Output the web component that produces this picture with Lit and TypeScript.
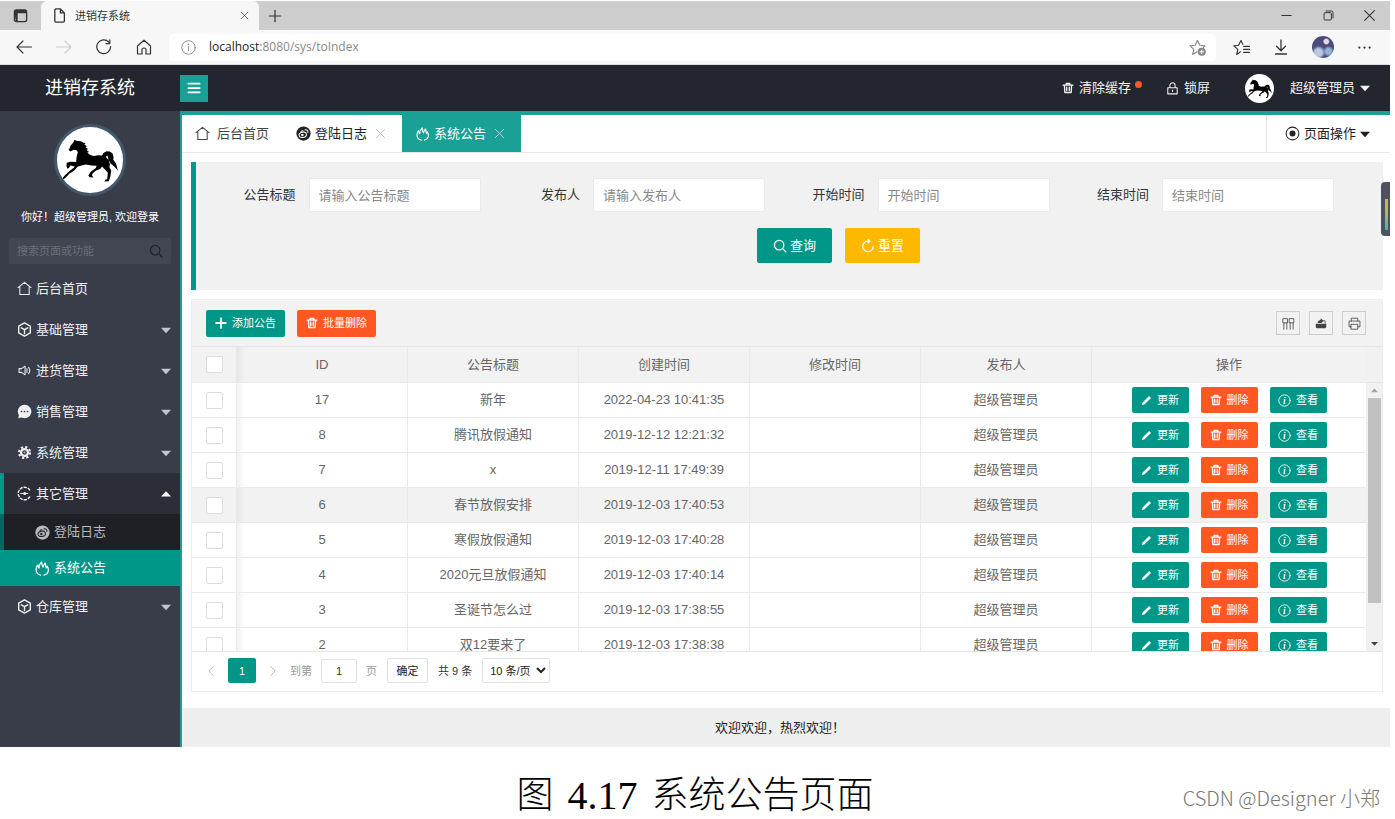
import { LitElement, html, css, svg, nothing, TemplateResult } from "lit";
import { customElement, property, state } from "lit/decorators.js";
import { classMap } from "lit/directives/class-map.js";

const stroke = (body: unknown, width = 1.2) =>
  svg`<g fill="none" stroke="currentColor" stroke-width=${width} stroke-linecap="round" stroke-linejoin="round">${body}</g>`;

const ICONS: Record<string, unknown> = {
  home: stroke(svg`<path d="M1 7 8 1.400 15 7M3 5.800v8.600h10V5.800"/>`, 1.1),
  cube: stroke(svg`<path d="M8 1 14.2 4.4v7.2L8 15 1.8 11.6V4.4zM4.6 6.2 8 8.2l3.4-2M8 8.2v4"/>`, 1.5),
  sound: stroke(svg`<path d="M2.2 6h2.6l3.8-2.6v9.2L4.8 10H2.2zM10.6 6v4M12.4 4.6c1.4 2 1.4 4.8 0 6.8"/>`, 1.1),
  chat: svg`<path fill="currentColor" d="M8 .8a7.2 7.2 0 1 1-3 13.7l-3.6.7.6-3.4A7.2 7.2 0 0 1 8 .8z"/><g fill="#393d49"><circle cx="4.8" cy="8" r=".9"/><circle cx="8" cy="8" r=".9"/><circle cx="11.2" cy="8" r=".9"/></g>`,
  gear: svg`<g fill="none" stroke="currentColor"><circle cx="8" cy="8" r="3.7" stroke-width="2.4"/><circle cx="8" cy="8" r="5.9" stroke-width="2.2" stroke-dasharray="2.4 2.234"/></g><circle cx="8" cy="8" r="1.1" fill="currentColor" opacity=".6"/>`,
  ring: svg`<path d="M13.800 4.600A6.700 6.700 0 1 0 13.800 11.400" fill="none" stroke="currentColor" stroke-width="1.500" stroke-dasharray="3.400 1"/><circle cx="8.300" cy="8" r="1.700" fill="currentColor"/><path d="M3.400 8H12" stroke="currentColor"/>`,
  weibo: svg`<circle cx="8" cy="8" r="7.6" fill="currentColor"/><g fill="none" stroke="var(--hole, #fff)" stroke-width="1.1"><ellipse cx="7.2" cy="9.4" rx="4" ry="2.8" transform="rotate(-12 7.2 9.4)"/><path d="M9.2 4.2c2.4-.5 4 1 3.4 3.2M5 6.4c1-1.4 2.6-1.8 2.8-.4"/></g><circle cx="6.8" cy="9.6" r="1.3" fill="var(--hole, #fff)"/>`,
  fire: stroke(svg`<path d="M6 15C2.200 14.200.8 10.800 1.400 7.400 1.600 6 2.200 5 3 4.200c0 1.600.4 2.600 1.200 3.400C4.200 5.200 5 2.800 7.200 1c-.2 2 .2 4 1.400 5.600C9 5 9.600 3.400 11 2.200c0 2.200.8 3.400 1 5.200.4-.6.8-1.200 1-2 2.200 4 1.600 8.400-3.400 9.600"/>`, 1.3),
  trash: stroke(svg`<path d="M1.500 4.200h13M5.600 4V2h4.800v2M3.200 4.400l.6 9.600h8.400l.6-9.600M6.300 7v4.400M9.700 7v4.400"/>`, 1.8),
  lock: stroke(svg`<path d="M2.200 7h11.600v7.600H2.200zM4.800 7V4.200a3.200 3.200 0 0 1 6.400 0V7M8 9.800v2"/>`, 1.3),
  menu: stroke(svg`<path d="M1.600 3h12.800M1.600 8h12.800M1.600 13h12.800"/>`, 2),
  search: stroke(svg`<circle cx="7" cy="7" r="5.400"/><path d="m11 11 3.800 3.800"/>`, 1.4),
  refresh: stroke(svg`<path d="M14 9A6 6 0 1 1 8.600 2.400M8.200.6l2 2-2.200 1.600"/>`, 1.5),
  plus: stroke(svg`<path d="M8 1.500v13M1.500 8h13"/>`, 2.4),
  thinPlus: stroke(svg`<path d="M8 1.500v13M1.500 8h13"/>`, 1.4),
  pencil: svg`<path fill="currentColor" d="m1 15 1.400-4.200L11.800 1.400l2.800 2.800L5.200 13.600z"/>`,
  info: svg`${stroke(svg`<circle cx="8" cy="8" r="7"/>`, 1.1)}<path d="M8.700 3.500 8.400 5M7 7h1.300l-.8 4.600h1.400" stroke="currentColor" stroke-width="1.600" fill="none"/>`,
  target: svg`<circle cx="8" cy="8" r="6.800" fill="none" stroke="currentColor" stroke-width="1.100"/><circle cx="8" cy="8" r="3.200" fill="currentColor"/>`,
  close: stroke(svg`<path d="m2 2 12 12M14 2 2 14"/>`, 1.3),
  columns: stroke(svg`<path d="M1.500 2h5.200v5.200H1.500zM9.300 2h5.200v5.200H9.300zM2.300 7.200V15M5.900 7.200V15M10.100 7.200V15M13.700 7.200V15"/>`, 1),
  share: svg`<path fill="currentColor" d="M1 9h14v4.500L13.500 15h-11L1 13.500zM3.500 8c.3-3 2-4 4-4V1.500L11.500 5 8.500 8z"/><path d="M10 5h3.500v4" fill="none" stroke="currentColor"/>`,
  printer: stroke(svg`<path d="M4 5V1.500h8V5M4 12H1.300V5h13.400v7H12M4 9h8v6H4z"/>`, 1),
  prev: stroke(svg`<path d="M11 2 5 8l6 6"/>`, 1.3),
  next: stroke(svg`<path d="m5 2 6 6-6 6"/>`, 1.3),
  tabs: svg`<rect x="1.500" y="2" width="13" height="12.500" rx="2" fill="none" stroke="currentColor" stroke-width="1.400"/><path d="M1.500 2h13v3.500h-13zM1.500 5h3.500v9H3z" fill="currentColor"/>`,
  file: stroke(svg`<path d="M3 2.200Q3 1 4.200 1H9l4.200 4.200v8.600q0 1.200-1.200 1.200H4.200Q3 15 3 13.800zM9 1v4.200h4.200"/>`, 1.4),
  back: stroke(svg`<path d="M15.500 8H1M7 2 1 8l6 6"/>`, 1.1),
  forward: stroke(svg`<path d="M.5 8H15M9 2l6 6-6 6"/>`, 1.1),
  reload: stroke(svg`<path d="M14.600 7.500A6.900 6.900 0 1 1 12.700 3M13.800.8v3.800H10"/>`, 1.2),
  house: stroke(svg`<path d="M1.500 7 8 1.200 14.500 7v8H10V10.500q0-1.500-2-1.500t-2 1.500V15H1.500z"/>`, 1.2),
  about: svg`${stroke(svg`<circle cx="8" cy="8" r="7.200"/><path d="M8 7v4.500"/>`, 1)}<circle cx="8" cy="4.600" r=".9" fill="currentColor"/>`,
  starAdd: svg`${stroke(svg`<path d="M7.500 12 3.500 14.500l1-4.700L1 6.500l4.800-.6L8 1.500l2.200 4.400 4.800.6-1.500 1.500"/>`, 1.1)}<circle cx="12" cy="12" r="3.800" fill="currentColor"/><path d="M12 10v4M10 12h4" stroke="#fff"/>`,
  starList: stroke(svg`<path d="M7 12 3.500 14.500l1-4.700L.8 6.500l4.400-.6L7.500 1.500 9.200 5M10 7h5.500M10 9.800h5.500M10 12.600h5.500"/>`, 1.1),
  download: stroke(svg`<path d="M8 1v10.500M3.500 7.200 8 11.700l4.500-4.500M2.500 15h11"/>`, 1.3),
  more: svg`<g fill="currentColor"><circle cx="2.500" cy="8" r="1.200"/><circle cx="8" cy="8" r="1.200"/><circle cx="13.500" cy="8" r="1.200"/></g>`,
  min: stroke(svg`<path d="M3 8h10"/>`, 1.2),
  restore: stroke(svg`<path d="M2.500 5.500q0-1 1-1h7q1 0 1 1v7q0 1-1 1h-7q-1 0-1-1zM5 2.500h6.500q2 0 2 2V11"/>`, 1.2),
  down: svg`<path d="M0 4.500h16L8 13z" fill="currentColor"/>`,
  up: svg`<path d="M0 12h16L8 3.500z" fill="currentColor"/>`,
};

const icon = (name: string, size = 14): TemplateResult =>
  html`<svg class="icon" width=${size} height=${size} viewBox="0 0 16 16" aria-hidden="true">${ICONS[name]}</svg>`;

@customElement("horse-avatar")
class HorseAvatar extends LitElement {
  static styles = css`
    :host { display: block; border-radius: 50%; background: #fff; overflow: hidden; box-sizing: border-box; }
    svg { display: block; width: 100%; height: 100%; }
  `;
  render() {
    return html`<svg viewBox="19 22 196 196" role="img" aria-label="头像">
      <path d="M54 90 59 78 68 67 71 60 76 63 90 64 98 69 104 70 100 74 108 79 104 82 111 87 107 90 114 96 109 98 118 105 128 108 142 106 153 107 157 99 166 94 176 95 184 101 187 111 186 119 194 130 200 152 189 139 179 131 172 120 169 107 164 110 172 120 176 132 175 142 180 151 178 166 173 183 160 184 162 179 168 177 170 158 162 149 153 139 148 146 134 152 124 161 123 166 127 172 116 171 112 166 120 154 134 144 137 137 122 136 104 133 92 136 80 140 70 152 56 160 46 171 38 178 35 174 44 164 58 151 68 144 72 139 58 136 55 143 50 146 47 138 48 128 58 125 76 126 77 112 81 96 76 90 67 90 59 95z"/>
    </svg>`;
  }
}

interface MenuItem { label: string; icon: string; children?: { label: string; icon: string }[]; leaf?: boolean }

const MENU: MenuItem[] = [
  { label: "后台首页", icon: "home", leaf: true },
  { label: "基础管理", icon: "cube" },
  { label: "进货管理", icon: "sound" },
  { label: "销售管理", icon: "chat" },
  { label: "系统管理", icon: "gear" },
  { label: "其它管理", icon: "ring", children: [{ label: "登陆日志", icon: "weibo" }, { label: "系统公告", icon: "fire" }] },
  { label: "仓库管理", icon: "cube" },
];

const FIELDS = [
  ["title", "公告标题", "请输入公告标题"],
  ["author", "发布人", "请输入发布人"],
  ["start", "开始时间", "开始时间"],
  ["end", "结束时间", "结束时间"],
];

const ROWS = [
  [17, "新年", "2022-04-23 10:41:35"],
  [8, "腾讯放假通知", "2019-12-12 12:21:32"],
  [7, "x", "2019-12-11 17:49:39"],
  [6, "春节放假安排", "2019-12-03 17:40:53"],
  [5, "寒假放假通知", "2019-12-03 17:40:28"],
  [4, "2020元旦放假通知", "2019-12-03 17:40:14"],
  [3, "圣诞节怎么过", "2019-12-03 17:38:55"],
  [2, "双12要来了", "2019-12-03 17:38:38"],
];

@customElement("app-root")
class AppRoot extends LitElement {
  @property() active = "系统公告";
  @state() private hovered = 6;

  static styles = css`
    :host { display: block; font: 13px/20px "Liberation Sans", "Noto Sans CJK SC", sans-serif; color: #333; background: #fff; }
    * { box-sizing: border-box; }
    button, input, select { font: inherit; color: inherit; margin: 0; }
    button { border: 0; padding: 0; background: none; display: flex; align-items: center; justify-content: center; }
    a { color: inherit; text-decoration: none; }
    .icon { display: block; flex: none; }
    .window { position: relative; margin: 1px 5px 0 0; }

    .strip { display: flex; height: 29px; background: #cdcdcd; color: #333; }
    .strip-left { width: 41px; display: flex; align-items: center; justify-content: center; }
    .page-tab { width: 218px; display: flex; align-items: center; gap: 8px; padding: 0 10px 0 11px; background: #f7f7f7; border-radius: 6px 6px 0 0; font-size: 11px; }
    .page-tab .name { flex: 1; }
    .new-tab { width: 32px; }
    .win-controls { margin-left: auto; display: flex; gap: 28px; padding-right: 14px; }
    .toolbar { display: flex; align-items: center; height: 35px; background: #f7f7f7; color: #333; padding: 0 18px 0 16px; border-bottom: 1px solid #ddd; }
    .nav { display: flex; gap: 24px; margin-right: 17px; }
    .nav .off { color: #ccc; }
    .address { flex: 1; display: flex; align-items: center; height: 27px; padding: 0 10px 0 12px; gap: 13px; background: #fff; border-radius: 4px; color: #888; font-family: "Open Sans", sans-serif; font-size: 12px; }
    .address .url { flex: 1; }
    .address b { font-weight: 400; color: #222; }
    .tools { display: flex; align-items: center; gap: 23px; margin-left: 17px; }
    .profile { width: 22px; height: 22px; border-radius: 50%; background: radial-gradient(circle at 65% 25%, #e8d8e2 0 10%, transparent 16%), radial-gradient(circle at 30% 75%, #b8c9e4 0 16%, transparent 30%), radial-gradient(circle at 75% 70%, #93b2d8 0 12%, transparent 25%), #4a4d78; }

    .header { display: flex; align-items: center; height: 46px; background: #23262e; color: #e6e6e6; padding-right: 20px; }
    .brand { width: 180px; text-align: center; font-size: 18px; color: #fff; }
    .burger { width: 28px; height: 27px; background: #1aa094; color: #fff; }
    .header-right { margin-left: auto; display: flex; align-items: center; }
    .header-right button { gap: 5px; color: #f2f2f2; }
    .dot { width: 7px; height: 7px; border-radius: 50%; background: #ff5722; margin: -8px 24px 0 4px; }
    .small-horse { width: 29px; height: 29px; margin: 0 16px 0 35px; }

    .body { display: flex; }
    .side { width: 180px; flex: none; background: #393d49; color: #f0f0f0; }
    .big-horse { width: 72px; height: 72px; border: 3px solid #44576b; margin: 13px auto 11px; }
    .hello { text-align: center; font-size: 11px; color: #fff; margin: 0 0 11px; }
    .search { display: flex; align-items: center; height: 26px; margin: 0 9px 4px; padding: 0 8px; background: #424652; border-radius: 2px; color: #1f222a; }
    .search input { flex: 1; min-width: 0; border: 0; padding: 0; background: none; outline: 0; font-size: 11px; color: #ccc; }
    .search input::placeholder { color: #6b6e78; }
    .menu { list-style: none; margin: 0; padding: 0; }
    .menu a { display: flex; align-items: center; gap: 4px; height: 41px; padding: 0 9px 0 17px; }
    .menu .arrow { margin-left: auto; color: #c4c5c9; display: flex; }
    .menu .open { border-left: 4px solid #009688; background: #2b2e37; padding-left: 13px; }
    .menu .open .arrow { color: #fff; }
    .menu .child { height: 36px; padding-left: 31px; border-left: 4px solid #00695f; background: #1f2025; color: #b9babd; --hole: #1f2025; }
    .menu .child.on { border-color: #009688; background: #009688; color: #fff; }

    .main { flex: 1; min-width: 0; border-left: 2px solid #1aa094; border-top: 4px solid #1aa094; background: #fff; }
    .tabs { display: flex; height: 38px; border-bottom: 1px solid #e6e6e6; color: #222; }
    .tab { display: flex; align-items: center; gap: 4px; padding: 0 16px 0 14px; }
    .tab.plain { gap: 7px; padding: 0 13px 0 13px; color: #444; }
    .tab button { margin-left: 4px; color: #bbb; }
    .tab.on { background: #1aa094; color: #fff; }
    .tab.on button { color: #b5dfdb; }
    .page-ops { margin-left: auto; padding: 0 20px 0 18px; gap: 4px; border-left: 1px solid #e6e6e6; color: #222; }
    .content { padding: 9px 7px 16px 9px; }

    .filter { border-left: 5px solid #009688; background: #f1f1f1; padding: 16px 0 27px; margin-bottom: 9px; }
    .fields { display: grid; grid-template-columns: repeat(4, 1fr); padding-right: 49px; margin-bottom: 16px; }
    .field { display: flex; align-items: center; justify-content: flex-end; gap: 13px; }
    .field input { width: 172px; height: 34px; border: 1px solid #e9e9e9; padding: 0 9px; background: #fff; border-radius: 2px; outline: 0; }
    .field input::placeholder { color: #888; }
    .actions { display: flex; justify-content: center; gap: 13px; padding-left: 98px; }
    .actions button { width: 75px; height: 35px; gap: 3px; border-radius: 2px; color: #fff; background: #009688; }
    .actions .warm { background: #ffb800; }

    .panel { border: 1px solid #ededed; }
    .panel-bar { display: flex; align-items: center; gap: 12px; height: 46px; padding: 0 16px 0 14px; background: #f2f2f2; }
    .panel-bar .bulk { width: 79px; height: 27px; }
    .fill { gap: 5px; border-radius: 2px; font-size: 11px; color: #fff; background: #009688; }
    .fill.danger { background: #ff5722; }
    .panel-tools { margin-left: auto; display: flex; gap: 9px; }
    .panel-tools button { width: 24px; height: 24px; border: 1px solid #ccc; color: #444; }

    .grid { display: flex; height: 306px; overflow: hidden; border-top: 1px solid #e6e6e6; border-bottom: 1px solid #e6e6e6; }
    .grid-view { flex: 1; overflow: hidden; }
    table { width: 100%; table-layout: fixed; border-collapse: separate; border-spacing: 0; color: #666; }
    th, td { height: 35px; padding: 0; text-align: center; font-weight: 400; line-height: 20px; border-right: 1px solid #e9e9e9; border-bottom: 1px solid #e9e9e9; }
    th { height: 36px; background: #f2f2f2; }
    .pick { width: 45px; }
    .ops { width: 275px; }
    th:nth-child(2), td:nth-child(2) { background-image: linear-gradient(90deg, rgba(0, 0, 0, .05), transparent 8px); }
    .hover td { background-color: #f2f2f2; }
    td:last-child, th:last-child { border-right-color: #f0f0f0; }
    .box { appearance: none; display: block; width: 17px; height: 17px; margin: 0 auto; border: 1px solid #ddd; border-radius: 2px; background: #fff; }
    .row-ops { display: flex; justify-content: center; gap: 12px; }
    .row-ops button { width: 57px; height: 26px; }
    .bar { width: 15px; flex: none; display: flex; flex-direction: column; align-items: center; background: #f1f1f1; color: #a3a3a3; }
    .bar .cap { height: 36px; align-self: stretch; border-bottom: 1px solid #e6e6e6; }
    .bar .end { height: 15px; display: flex; align-items: center; }
    .bar .thumb { height: 205px; width: 13px; background: #c1c1c1; }
    .bar .last { margin-top: auto; color: #444; }

    .pager { display: flex; align-items: center; gap: 10px; height: 39px; padding: 0 12px 2px; font-size: 11px; color: #999; }
    .pager .step { width: 14px; height: 24px; color: #b5b5b5; }
    .pager .current { width: 28px; height: 25px; border-radius: 2px; background: #009688; color: #fff; }
    .pager input { width: 36px; height: 24px; border: 1px solid #e2e2e2; text-align: center; padding: 0; color: #333; border-radius: 2px; }
    .pager .ok { width: 41px; height: 25px; border: 1px solid #e2e2e2; color: #222; border-radius: 2px; }
    .pager .total { color: #333; }
    .pager label { display: flex; align-items: center; gap: 9px; }
    .pager select { height: 25px; width: 68px; padding: 0 0 0 3px; border: 1px solid #e2e2e2; background: #fff; color: #222; border-radius: 2px; }
    .footer { height: 39px; display: flex; align-items: center; justify-content: center; padding-right: 12px; background: #eee; color: #222; }

    .meter { position: absolute; right: 0; top: 181px; width: 9px; height: 54px; border-radius: 4px 0 0 4px; background: #4d5263; display: flex; align-items: flex-end; justify-content: flex-end; padding: 6px 2px; }
    .meter i { width: 3px; height: 31px; background: linear-gradient(#d8b04c, #9fbf5a 50%, #3fb8a4); }

    .caption { display: flex; align-items: center; justify-content: center; gap: 14px; height: 72px; padding-top: 26px; font: 300 37px/44px "Liberation Serif", "Noto Sans CJK SC", serif; color: #000; }
    .caption .num { font-size: 40px; }
    .mark { position: absolute; right: 10px; top: 784px; font: 300 20px/26px "Noto Sans CJK SC", sans-serif; color: #777; }
  `;

  private renderBrowser() {
    return html`
      <div class="strip">
        <div class="strip-left">${icon("tabs", 15)}</div>
        <div class="page-tab">${icon("file", 15)}<span class="name">进销存系统</span><button aria-label="关闭标签页">${icon("close", 9)}</button></div>
        <button class="new-tab" aria-label="新建标签页">${icon("thinPlus", 14)}</button>
        <div class="win-controls">
          <button aria-label="最小化">${icon("min", 15)}</button><button aria-label="还原">${icon("restore", 13)}</button><button aria-label="关闭">${icon("close", 13)}</button>
        </div>
      </div>
      <div class="toolbar">
        <div class="nav">
          <button aria-label="后退">${icon("back", 16)}</button><button class="off" aria-label="前进">${icon("forward", 16)}</button>
          <button aria-label="刷新">${icon("reload", 16)}</button><button aria-label="主页">${icon("house", 16)}</button>
        </div>
        <div class="address">${icon("about", 15)}<span class="url"><b>localhost</b>:8080/sys/toIndex</span>${icon("starAdd", 17)}</div>
        <div class="tools">
          ${icon("starList", 17)}${icon("download", 16)}<span class="profile"></span>${icon("more", 15)}
        </div>
      </div>`;
  }

  private renderMenu(item: MenuItem) {
    const open = !!item.children;
    return html`<li>
      <a href="#" class=${classMap({ open })}>${icon(item.icon, 15)}${item.label}
        ${item.leaf ? nothing : html`<span class="arrow">${icon(open ? "up" : "down", 10)}</span>`}</a>
      ${item.children?.map((c) => html`<a href="#" class=${classMap({ child: true, on: c.label === this.active })}>${icon(c.icon, 15)}${c.label}</a>`)}
    </li>`;
  }

  private renderRow(row: (string | number)[]) {
    return html`<tr class=${classMap({ hover: row[0] === this.hovered })}>
      <td><input class="box" type="checkbox" aria-label="选择 ${row[0]}"></td>
      <td>${row[0]}</td><td>${row[1]}</td><td>${row[2]}</td><td></td><td>超级管理员</td>
      <td><div class="row-ops">
        <button class="fill">${icon("pencil", 11)}更新</button>
        <button class="fill danger">${icon("trash", 12)}删除</button>
        <button class="fill">${icon("info", 13)}查看</button>
      </div></td>
    </tr>`;
  }

  render() {
    return html`
      <div class="window">
        ${this.renderBrowser()}
        <header class="header">
          <div class="brand">进销存系统</div>
          <button class="burger" aria-label="折叠菜单">${icon("menu", 14)}</button>
          <div class="header-right">
            <button>${icon("trash", 12)}清除缓存</button><span class="dot"></span>
            <button>${icon("lock", 13)}锁屏</button>
            <horse-avatar class="small-horse"></horse-avatar>
            <button>超级管理员${icon("down", 10)}</button>
          </div>
        </header>
        <div class="body">
          <aside class="side">
            <horse-avatar class="big-horse"></horse-avatar>
            <p class="hello">你好！超级管理员, 欢迎登录</p>
            <div class="search"><input type="text" aria-label="搜索" placeholder="搜索页面或功能">${icon("search", 14)}</div>
            <ul class="menu">${MENU.map((m) => this.renderMenu(m))}</ul>
          </aside>
          <main class="main">
            <nav class="tabs">
              <a href="#" class="tab plain">${icon("home", 15)}后台首页</a>
              <div class="tab">${icon("weibo", 15)}登陆日志<button aria-label="关闭">${icon("close", 11)}</button></div>
              <div class="tab on">${icon("fire", 14)}系统公告<button aria-label="关闭">${icon("close", 11)}</button></div>
              <button class="page-ops">${icon("target", 15)}页面操作${icon("down", 10)}</button>
            </nav>
            <div class="content">
              <form class="filter">
                <div class="fields">
                  ${FIELDS.map(([id, label, hint]) => html`<div class="field"><label for=${id}>${label}</label><input id=${id} type="text" placeholder=${hint}></div>`)}
                </div>
                <div class="actions">
                  <button type="button">${icon("search", 14)}查询</button>
                  <button type="reset" class="warm">${icon("refresh", 14)}重置</button>
                </div>
              </form>
              <section class="panel">
                <div class="panel-bar">
                  <button class="fill bulk">${icon("plus", 12)}添加公告</button>
                  <button class="fill danger bulk">${icon("trash", 12)}批量删除</button>
                  <div class="panel-tools">
                    <button aria-label="筛选列">${icon("columns", 13)}</button><button aria-label="导出">${icon("share", 12)}</button><button aria-label="打印">${icon("printer", 13)}</button>
                  </div>
                </div>
                <div class="grid">
                  <div class="grid-view">
                    <table>
                      <thead><tr>
                        <th class="pick"><input class="box" type="checkbox" aria-label="全选"></th>
                        <th>ID</th><th>公告标题</th><th>创建时间</th><th>修改时间</th><th>发布人</th><th class="ops">操作</th>
                      </tr></thead>
                      <tbody>${ROWS.map((r) => this.renderRow(r))}</tbody>
                    </table>
                  </div>
                  <div class="bar" aria-hidden="true">
                    <span class="cap"></span><span class="end">${icon("up", 7)}</span><span class="thumb"></span><span class="end last">${icon("down", 7)}</span>
                  </div>
                </div>
                <div class="pager">
                  <button class="step" aria-label="上一页">${icon("prev", 12)}</button>
                  <button class="current">1</button>
                  <button class="step" aria-label="下一页">${icon("next", 12)}</button>
                  <label>到第<input type="text" value="1">页</label>
                  <button class="ok">确定</button>
                  <span class="total">共 9 条</span>
                  <select aria-label="每页条数"><option>10 条/页</option><option>20 条/页</option></select>
                </div>
              </section>
            </div>
            <footer class="footer">欢迎欢迎，热烈欢迎！</footer>
          </main>
        </div>
        <div class="meter"><i></i></div>
        <div class="caption"><span>图</span><span class="num">4.17</span><span>系统公告页面</span></div>
        <div class="mark">CSDN @Designer 小郑</div>
      </div>`;
  }
}
